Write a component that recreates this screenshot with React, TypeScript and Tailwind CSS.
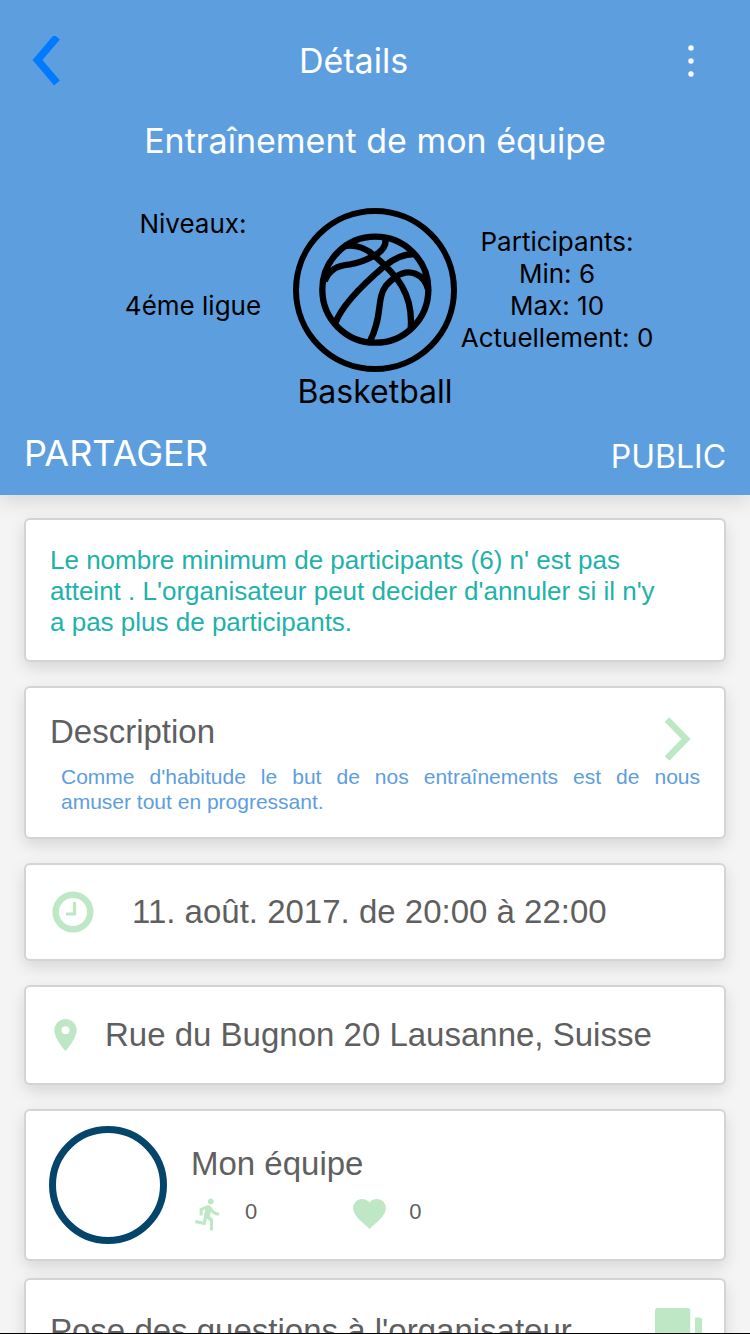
import type { ReactNode } from "react";

function Card({ className = "", children }: { className?: string; children: ReactNode }) {
  return (
    <section
      className={`shrink-0 rounded-md border-2 border-[#d3d4d4] bg-white text-[#5f5f5f] shadow-[0_6px_16px_rgba(0,0,0,0.12)] ${className}`}
    >
      {children}
    </section>
  );
}

function Basketball() {
  return (
    <svg viewBox="39 39 492 492" className="size-[164px]" fill="none" stroke="#000" strokeWidth="19" aria-hidden="true">
      <circle cx="285" cy="285" r="237" strokeWidth="18" />
      <circle cx="286" cy="284" r="159" />
      <path d="M193 153C232 147 258 159 283 182C350 240 401 296 392 402" />
      <path d="M134 258C150 222 172 212 210 208C238 204 262 193 283 182C308 168 321 150 315 129" />
      <path d="M165 387C184 332 256 262 315 212C346 187 375 177 403 177" />
      <path d="M269 441C310 360 288 312 318 272C330 258 336 254 348 245C388 218 432 236 444 283" />
    </svg>
  );
}

export default function App() {
  return (
    <div className="flex h-screen flex-col overflow-hidden border-b border-black bg-[#f4f4f4]">
      <header className="relative z-10 shrink-0 bg-[#5d9ede] px-6 pb-[18px] font-[Inter,sans-serif] text-white shadow-[0_6px_20px_rgba(0,0,0,0.12)]">
        <div className="flex h-[121px] items-center justify-between">
          <button type="button" aria-label="Retour" className="flex w-12 justify-start pl-2">
            <svg viewBox="0 0 28 50" className="h-[50px] w-7" fill="none" stroke="#007aff" strokeWidth="7.5" aria-hidden="true">
              <path d="M25 1L5.500 24L25 47" />
            </svg>
          </button>
          <h1 className="text-[34px] leading-10">Détails</h1>
          <button type="button" aria-label="Plus d'options" className="flex w-[91px] justify-end pr-8">
            <svg viewBox="0 0 6 34" className="h-[34px] w-1.5" fill="#fff" aria-hidden="true">
              <circle cx="3" cy="4" r="2.7" />
              <circle cx="3" cy="17" r="2.7" />
              <circle cx="3" cy="30" r="2.7" />
            </svg>
          </button>
        </div>
        <h2 className="text-center text-[34px] leading-10">Entraînement de mon équipe</h2>
        <div className="mx-auto mt-[47px] grid max-w-[546px] grid-cols-3 text-[26px] leading-8 text-black">
          <div className="flex flex-col items-center gap-[50px] whitespace-nowrap">
            <p>Niveaux:</p>
            <p>4éme ligue</p>
          </div>
          <div className="flex flex-col items-center">
            <Basketball />
            <p className="text-[32px] leading-10">Basketball</p>
          </div>
          <div className="flex flex-col items-center whitespace-nowrap pt-[18px]">
            <p>Participants:</p>
            <p>Min: 6</p>
            <p>Max: 10</p>
            <p>Actuellement: 0</p>
          </div>
        </div>
        <div className="mt-[18px] flex items-end justify-between">
          <button type="button" className="text-[36px] leading-[47px]">PARTAGER</button>
          <button type="button" className="text-[32px] leading-10">PUBLIC</button>
        </div>
      </header>

      <main className="flex min-h-0 flex-1 flex-col gap-6 overflow-y-auto px-6 pt-[23px] font-['Liberation_Sans',Arial,sans-serif] [scrollbar-width:none]">
        <Card className="px-6 pt-[25px] pb-[22px]">
          <p className="pr-8 text-[26px] leading-[31px] text-[#20b2aa]">
            Le nombre minimum de participants (6) n' est pas atteint . L'organisateur peut decider d'annuler si il n'y a pas
            plus de participants.
          </p>
        </Card>

        <Card className="px-6 pt-6 pb-[23px]">
          <div className="flex h-[52px] items-center justify-between pr-2">
            <h3 className="self-start text-[33px] leading-10">Description</h3>
            <svg viewBox="0 0 28 44" className="h-11 w-7" fill="none" stroke="#bde7c5" strokeWidth="6.5" aria-hidden="true">
              <path d="M3 3.500L22 23L3 42.500" />
            </svg>
          </div>
          <p className="pl-[11px] text-justify text-[21px] leading-[25px] text-[#5d9ede]">
            Comme d'habitude le but de nos entraînements est de nous amuser&nbsp;tout en progressant.
          </p>
        </Card>

        <Card className="flex h-[98px] items-center gap-[38px] px-[26px]">
          <svg viewBox="0 0 42 42" className="size-[42px]" fill="none" stroke="#bde7c5" aria-hidden="true">
            <circle cx="21" cy="21" r="17.3" strokeWidth="6.4" />
            <path d="M22.5 11V23H14" strokeWidth="3.2" />
          </svg>
          <p className="text-[33px] leading-10">11. août. 2017. de 20:00 à 22:00</p>
        </Card>

        <Card className="flex h-[100px] items-center gap-7 px-7">
          <svg viewBox="5 2 14 20" className="h-8 w-[23px]" fill="#bde7c5" aria-hidden="true">
            <path d="M12 2C8.13 2 5 5.13 5 9c0 5.25 7 13 7 13s7-7.75 7-13c0-3.87-3.13-7-7-7zm0 9.5a2.5 2.5 0 1 1 0-5 2.5 2.5 0 0 1 0 5z" />
          </svg>
          <p className="text-[33px] leading-10">Rue du Bugnon 20 Lausanne, Suisse</p>
        </Card>

        <Card className="flex h-[152px] items-center gap-6 px-[23px]">
          <div className="size-[118px] rounded-full border-[7px] border-[#05456b]" />
          <div className="flex flex-col gap-[14px] pt-1">
            <h3 className="text-[33px] leading-10">Mon équipe</h3>
            <div className="flex items-center gap-24 pl-1 text-[22px] leading-7">
              <div className="flex items-center gap-[26px]">
                <svg viewBox="2.89 1.48 16.1 21.5" className="h-[33px] w-6" fill="#bde7c5" aria-hidden="true">
                  <path d="M13.49 5.48c1.1 0 2-.9 2-2s-.9-2-2-2-2 .9-2 2 .9 2 2 2zm-3.6 13.9l1-4.4 2.1 2v6h2v-7.5l-2.1-2 .6-3c1.3 1.5 3.3 2.5 5.5 2.5v-2c-1.9 0-3.5-1-4.3-2.4l-1-1.6c-.4-.6-1-1-1.7-1-.3 0-.5.1-.8.1l-5.2 2.2v4.7h2v-3.4l1.8-.7-1.6 8.1-4.9-1-.4 2 7 1.4z" />
                </svg>
                <span className="pb-1">0</span>
              </div>
              <div className="flex items-center gap-[23px]">
                <svg viewBox="2 3 20 18.35" className="h-[30px] w-[33px]" fill="#bde7c5" aria-hidden="true">
                  <path d="M12 21.35l-1.45-1.32C5.4 15.36 2 12.28 2 8.5 2 5.42 4.42 3 7.5 3c1.74 0 3.41.81 4.5 2.09C13.09 3.81 14.76 3 16.5 3 19.58 3 22 5.42 22 8.5c0 3.78-3.4 6.86-8.55 11.54L12 21.35z" />
                </svg>
                <span className="pb-1">0</span>
              </div>
            </div>
          </div>
        </Card>

        <Card className="-mt-[7px] flex h-[106px] items-center justify-between pr-[22px] pl-6">
          <h3 className="text-[33px] leading-10">Pose des questions à l'organisateur</h3>
          <svg viewBox="2 2 20 20" className="size-[47px]" fill="#bde7c5" aria-hidden="true">
            <path d="M21 6h-2v9H6v2c0 .55.45 1 1 1h11l4 4V7c0-.55-.45-1-1-1zm-4 6V3c0-.55-.45-1-1-1H3c-.55 0-1 .45-1 1v14l4-4h10c.55 0 1-.45 1-1z" />
          </svg>
        </Card>
      </main>
    </div>
  );
}
